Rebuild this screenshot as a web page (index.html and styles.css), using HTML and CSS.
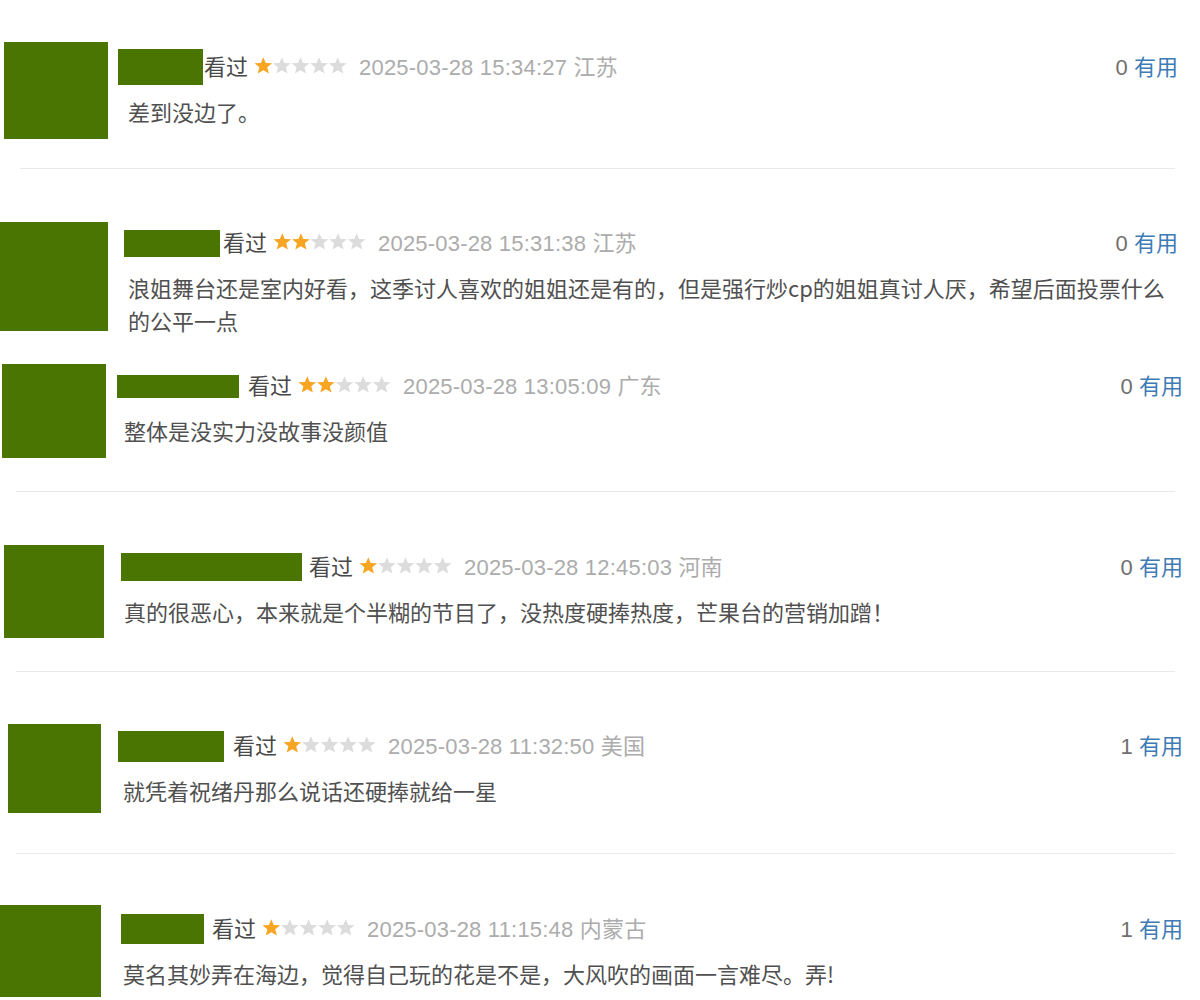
FILE: index.html
```html
<!DOCTYPE html>
<html lang="zh-CN">
<head>
  <meta charset="UTF-8">
  <meta name="viewport" content="width=device-width, initial-scale=1.0">
  <title>短评</title>
  <link rel="stylesheet" href="styles.css">
</head>
<body>
  <div class="comments">

    <div class="comment r1">
      <div class="avatar"></div>
      <div class="comment-body">
        <div class="meta">
          <span class="name"></span>
          <span class="watched">看过</span>
          <svg class="stars" viewBox="0 0 100 20"><polygon class="on" points="10,1 12.6,7.2 19.5,7.6 14.2,12 16,18.7 10,15 4,18.7 5.8,12 0.5,7.6 7.4,7.2"/><polygon points="30,1 32.6,7.2 39.5,7.6 34.2,12 36,18.7 30,15 24,18.7 25.8,12 20.5,7.6 27.4,7.2"/><polygon points="50,1 52.6,7.2 59.5,7.6 54.2,12 56,18.7 50,15 44,18.7 45.8,12 40.5,7.6 47.4,7.2"/><polygon points="70,1 72.6,7.2 79.5,7.6 74.2,12 76,18.7 70,15 64,18.7 65.8,12 60.5,7.6 67.4,7.2"/><polygon points="90,1 92.6,7.2 99.5,7.6 94.2,12 96,18.7 90,15 84,18.7 85.8,12 80.5,7.6 87.4,7.2"/></svg>
          <span class="time">2025-03-28 15:34:27 江苏</span>
          <span class="votes"><span class="count">0</span> <a class="useful">有用</a></span>
        </div>
        <p class="text">差到没边了。</p>
      </div>
    </div>

    <div class="divider d1"></div>

    <div class="comment r2">
      <div class="avatar"></div>
      <div class="comment-body">
        <div class="meta">
          <span class="name"></span>
          <span class="watched">看过</span>
          <svg class="stars" viewBox="0 0 100 20"><polygon class="on" points="10,1 12.6,7.2 19.5,7.6 14.2,12 16,18.7 10,15 4,18.7 5.8,12 0.5,7.6 7.4,7.2"/><polygon class="on" points="30,1 32.6,7.2 39.5,7.6 34.2,12 36,18.7 30,15 24,18.7 25.8,12 20.5,7.6 27.4,7.2"/><polygon points="50,1 52.6,7.2 59.5,7.6 54.2,12 56,18.7 50,15 44,18.7 45.8,12 40.5,7.6 47.4,7.2"/><polygon points="70,1 72.6,7.2 79.5,7.6 74.2,12 76,18.7 70,15 64,18.7 65.8,12 60.5,7.6 67.4,7.2"/><polygon points="90,1 92.6,7.2 99.5,7.6 94.2,12 96,18.7 90,15 84,18.7 85.8,12 80.5,7.6 87.4,7.2"/></svg>
          <span class="time">2025-03-28 15:31:38 江苏</span>
          <span class="votes"><span class="count">0</span> <a class="useful">有用</a></span>
        </div>
        <p class="text">浪姐舞台还是室内好看，这季讨人喜欢的姐姐还是有的，但是强行炒cp的姐姐真讨人厌，希望后面投票什么的公平一点</p>
      </div>
    </div>

    <div class="comment r3">
      <div class="avatar"></div>
      <div class="comment-body">
        <div class="meta">
          <span class="name"></span>
          <span class="watched">看过</span>
          <svg class="stars" viewBox="0 0 100 20"><polygon class="on" points="10,1 12.6,7.2 19.5,7.6 14.2,12 16,18.7 10,15 4,18.7 5.8,12 0.5,7.6 7.4,7.2"/><polygon class="on" points="30,1 32.6,7.2 39.5,7.6 34.2,12 36,18.7 30,15 24,18.7 25.8,12 20.5,7.6 27.4,7.2"/><polygon points="50,1 52.6,7.2 59.5,7.6 54.2,12 56,18.7 50,15 44,18.7 45.8,12 40.5,7.6 47.4,7.2"/><polygon points="70,1 72.6,7.2 79.5,7.6 74.2,12 76,18.7 70,15 64,18.7 65.8,12 60.5,7.6 67.4,7.2"/><polygon points="90,1 92.6,7.2 99.5,7.6 94.2,12 96,18.7 90,15 84,18.7 85.8,12 80.5,7.6 87.4,7.2"/></svg>
          <span class="time">2025-03-28 13:05:09 广东</span>
          <span class="votes"><span class="count">0</span> <a class="useful">有用</a></span>
        </div>
        <p class="text">整体是没实力没故事没颜值</p>
      </div>
    </div>

    <div class="divider"></div>

    <div class="comment r4">
      <div class="avatar"></div>
      <div class="comment-body">
        <div class="meta">
          <span class="name"></span>
          <span class="watched">看过</span>
          <svg class="stars" viewBox="0 0 100 20"><polygon class="on" points="10,1 12.6,7.2 19.5,7.6 14.2,12 16,18.7 10,15 4,18.7 5.8,12 0.5,7.6 7.4,7.2"/><polygon points="30,1 32.6,7.2 39.5,7.6 34.2,12 36,18.7 30,15 24,18.7 25.8,12 20.5,7.6 27.4,7.2"/><polygon points="50,1 52.6,7.2 59.5,7.6 54.2,12 56,18.7 50,15 44,18.7 45.8,12 40.5,7.6 47.4,7.2"/><polygon points="70,1 72.6,7.2 79.5,7.6 74.2,12 76,18.7 70,15 64,18.7 65.8,12 60.5,7.6 67.4,7.2"/><polygon points="90,1 92.6,7.2 99.5,7.6 94.2,12 96,18.7 90,15 84,18.7 85.8,12 80.5,7.6 87.4,7.2"/></svg>
          <span class="time">2025-03-28 12:45:03 河南</span>
          <span class="votes"><span class="count">0</span> <a class="useful">有用</a></span>
        </div>
        <p class="text">真的很恶心，本来就是个半糊的节目了，没热度硬捧热度，芒果台的营销加蹭！</p>
      </div>
    </div>

    <div class="divider"></div>

    <div class="comment r5">
      <div class="avatar"></div>
      <div class="comment-body">
        <div class="meta">
          <span class="name"></span>
          <span class="watched">看过</span>
          <svg class="stars" viewBox="0 0 100 20"><polygon class="on" points="10,1 12.6,7.2 19.5,7.6 14.2,12 16,18.7 10,15 4,18.7 5.8,12 0.5,7.6 7.4,7.2"/><polygon points="30,1 32.6,7.2 39.5,7.6 34.2,12 36,18.7 30,15 24,18.7 25.8,12 20.5,7.6 27.4,7.2"/><polygon points="50,1 52.6,7.2 59.5,7.6 54.2,12 56,18.7 50,15 44,18.7 45.8,12 40.5,7.6 47.4,7.2"/><polygon points="70,1 72.6,7.2 79.5,7.6 74.2,12 76,18.7 70,15 64,18.7 65.8,12 60.5,7.6 67.4,7.2"/><polygon points="90,1 92.6,7.2 99.5,7.6 94.2,12 96,18.7 90,15 84,18.7 85.8,12 80.5,7.6 87.4,7.2"/></svg>
          <span class="time">2025-03-28 11:32:50 美国</span>
          <span class="votes"><span class="count">1</span> <a class="useful">有用</a></span>
        </div>
        <p class="text">就凭着祝绪丹那么说话还硬捧就给一星</p>
      </div>
    </div>

    <div class="divider"></div>

    <div class="comment r6">
      <div class="avatar"></div>
      <div class="comment-body">
        <div class="meta">
          <span class="name"></span>
          <span class="watched">看过</span>
          <svg class="stars" viewBox="0 0 100 20"><polygon class="on" points="10,1 12.6,7.2 19.5,7.6 14.2,12 16,18.7 10,15 4,18.7 5.8,12 0.5,7.6 7.4,7.2"/><polygon points="30,1 32.6,7.2 39.5,7.6 34.2,12 36,18.7 30,15 24,18.7 25.8,12 20.5,7.6 27.4,7.2"/><polygon points="50,1 52.6,7.2 59.5,7.6 54.2,12 56,18.7 50,15 44,18.7 45.8,12 40.5,7.6 47.4,7.2"/><polygon points="70,1 72.6,7.2 79.5,7.6 74.2,12 76,18.7 70,15 64,18.7 65.8,12 60.5,7.6 67.4,7.2"/><polygon points="90,1 92.6,7.2 99.5,7.6 94.2,12 96,18.7 90,15 84,18.7 85.8,12 80.5,7.6 87.4,7.2"/></svg>
          <span class="time">2025-03-28 11:15:48 内蒙古</span>
          <span class="votes"><span class="count">1</span> <a class="useful">有用</a></span>
        </div>
        <p class="text">莫名其妙弄在海边，觉得自己玩的花是不是，大风吹的画面一言难尽。弄!</p>
      </div>
    </div>

  </div>
</body>
</html>
```

FILE: styles.css
```css
    body {
      margin: 0;
      background: #fff;
      font-family: "Noto Sans CJK SC", sans-serif;
      color: #555;
    }

    .comments {
      display: flex;
      flex-direction: column;
      padding-top: 42px;
    }

    .comment {
      display: flex;
      align-items: flex-start;
      padding-left: var(--pad-l);
      padding-right: var(--pad-r);
      margin-top: var(--mt);
    }

    .avatar {
      flex: none;
      width: var(--av-w);
      height: var(--av-h);
      background: #4b7502;
    }

    .comment-body {
      flex: 1;
      margin-left: var(--gap);
      padding-top: var(--pt);
    }

    .meta {
      display: flex;
      align-items: center;
      height: 28px;
      padding-bottom: 4px;
      font-size: 22px;
      white-space: nowrap;
    }

    .name {
      flex: none;
      width: var(--bar-w);
      height: var(--bar-h);
      margin-top: 4px;
      margin-right: var(--bar-gap);
      background: #4b7502;
    }

    .watched {
      color: #494949;
      margin-right: 6px;
    }

    .stars {
      width: 93px;
      height: 19px;
      margin-right: 12px;
    }
    .stars polygon {
      fill: #dcdcdc;
    }
    .stars polygon.on {
      fill: #f7a523;
    }

    .time {
      font-family: "Liberation Sans", "Noto Sans CJK SC", sans-serif;
      letter-spacing: 0.2px;
      color: #acacac;
    }

    .votes {
      margin-left: auto;
      font-family: "Liberation Sans", "Noto Sans CJK SC", sans-serif;
    }
    .votes .count {
      color: #6f6f6f;
    }
    .useful {
      color: #3f7bb4;
      text-decoration: none;
    }

    .text {
      margin: 12px 0 0 var(--text-x);
      font-size: 22px;
      line-height: 33px;
      color: #505050;
    }

    .divider {
      height: 1px;
      margin: 33px 25px 0 16px;
      background: #e9e9ec;
    }
    .divider.d1 {
      margin-top: 29px;
      margin-left: 20px;
    }

    /* each row came from a different crop, so sizes differ a little */
    .r1 { --mt: 0px;  --pad-l: 4px; --pad-r: 22px; --av-w: 104px; --av-h: 97px;  --gap: 10px; --pt: 9px; --bar-w: 85px;  --bar-h: 36px; --bar-gap: 1px; --text-x: 10px; }
    .r2 { --mt: 53px; --pad-l: 0px; --pad-r: 22px; --av-w: 108px; --av-h: 109px; --gap: 16px; --pt: 5px; --bar-w: 96px;  --bar-h: 27px; --bar-gap: 3px; --text-x: 4px; }
    .r3 { --mt: 27px; --pad-l: 2px; --pad-r: 17px; --av-w: 104px; --av-h: 94px;  --gap: 11px; --pt: 6px; --bar-w: 122px; --bar-h: 23px; --bar-gap: 9px; --text-x: 7px; }
    .r4 { --mt: 53px; --pad-l: 4px; --pad-r: 17px; --av-w: 100px; --av-h: 93px;  --gap: 17px; --pt: 6px; --bar-w: 181px; --bar-h: 28px; --bar-gap: 7px; --text-x: 3px; }
    .r5 { --mt: 52px; --pad-l: 8px; --pad-r: 17px; --av-w: 93px;  --av-h: 89px;  --gap: 17px; --pt: 6px; --bar-w: 106px; --bar-h: 31px; --bar-gap: 9px; --text-x: 5px; }
    .r6 { --mt: 51px; --pad-l: 0px; --pad-r: 17px; --av-w: 101px; --av-h: 92px;  --gap: 20px; --pt: 8px; --bar-w: 83px;  --bar-h: 30px; --bar-gap: 8px; --text-x: 2px; }

    .r5 + .divider {
      margin-top: 40px;
    }
```
